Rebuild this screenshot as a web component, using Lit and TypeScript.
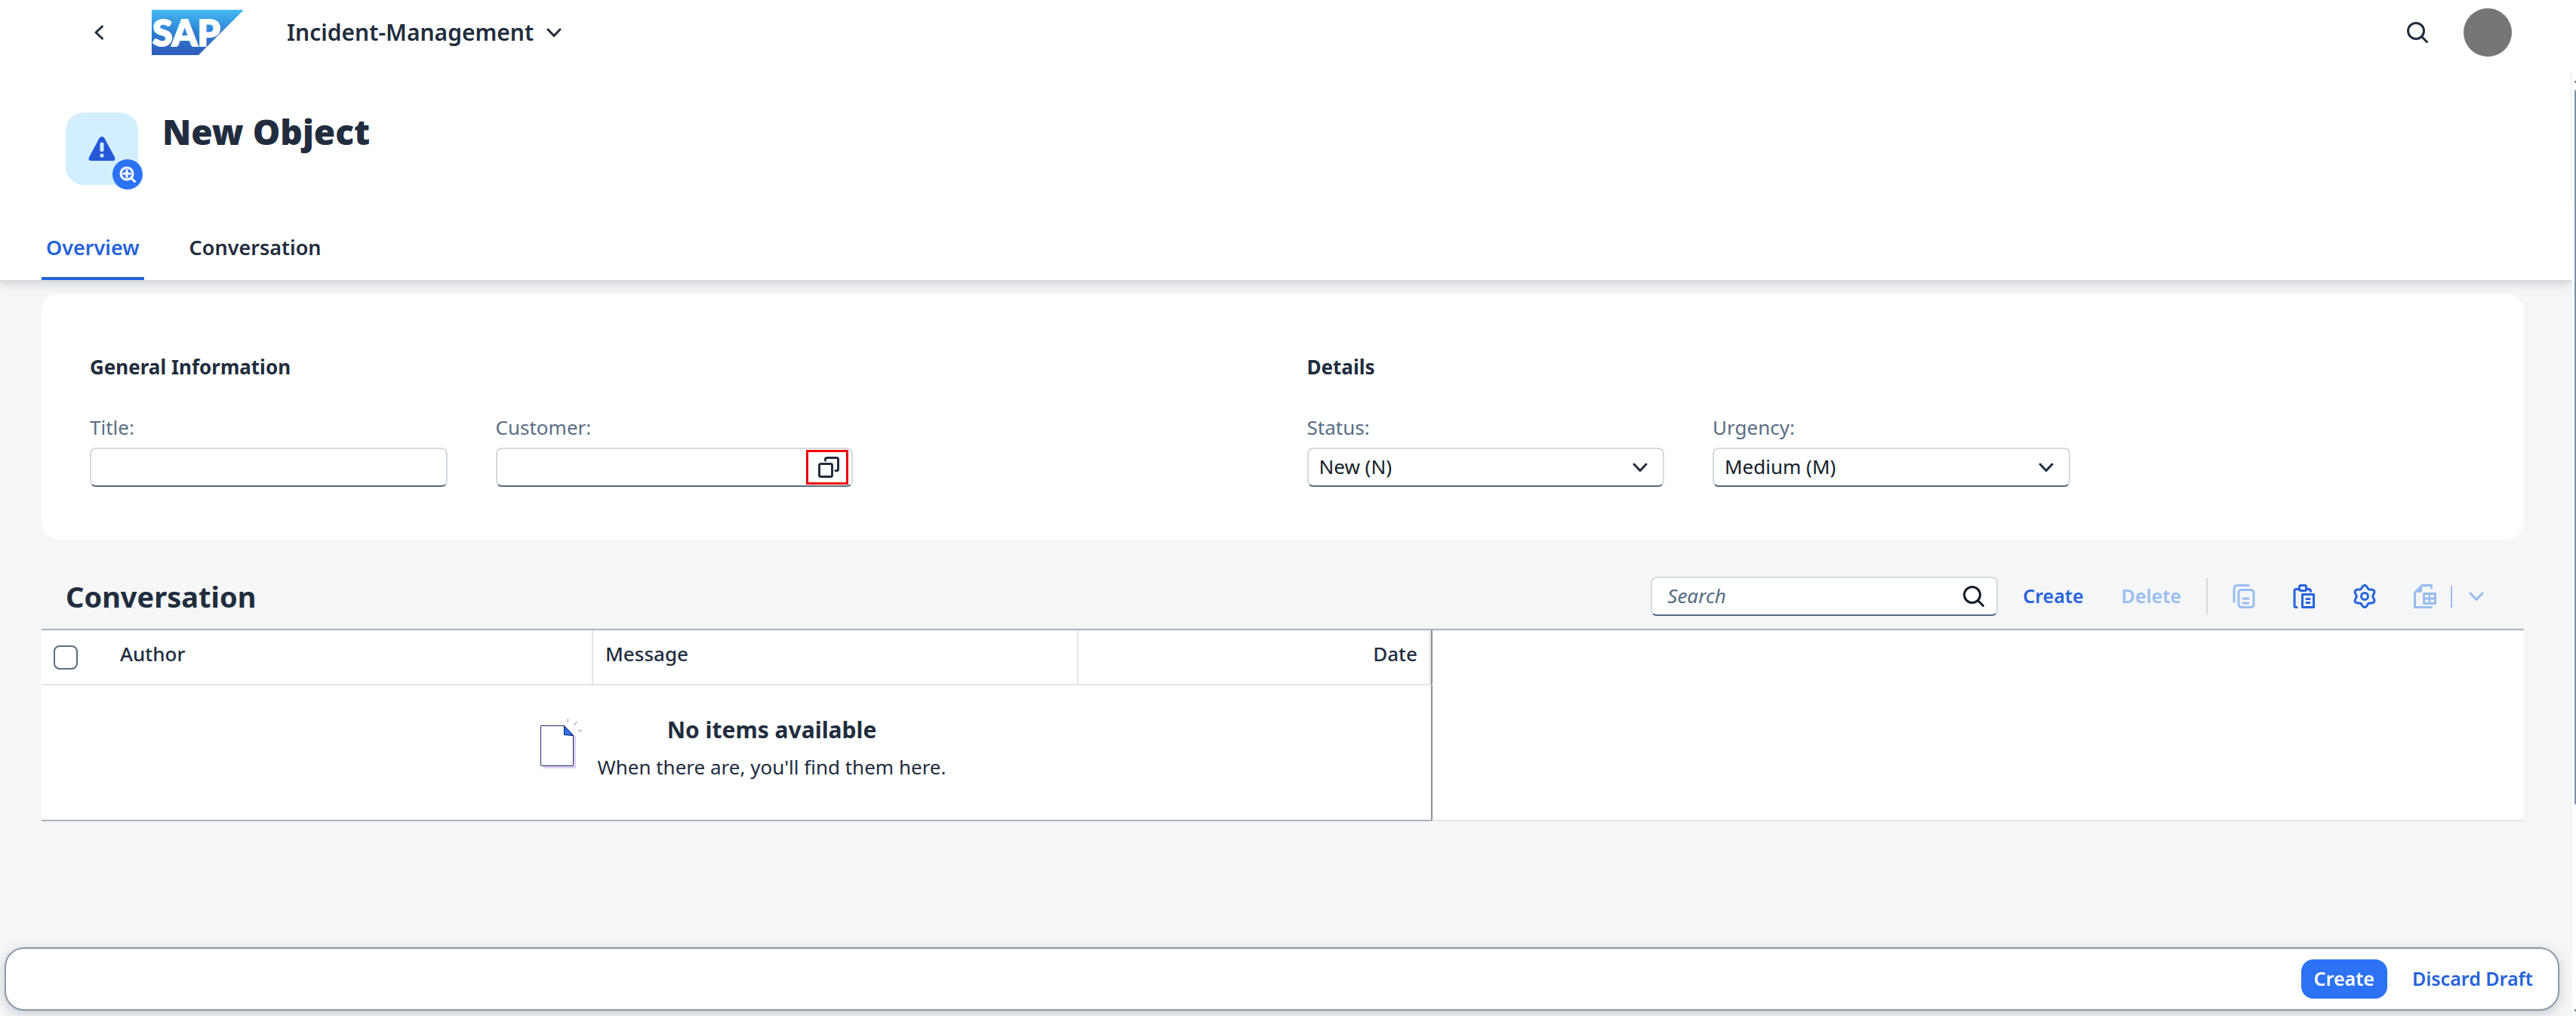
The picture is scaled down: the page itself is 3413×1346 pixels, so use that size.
import { LitElement, html, svg, css } from "lit";
import { customElement } from "lit/decorators.js";

/** Outline of the settings gear: a circle with six soft teeth. */
const gearPath = (() => {
  const points: string[] = [];
  for (let i = 0; i < 72; i++) {
    const a = (i / 72) * Math.PI * 2;
    const r = 12.6 + 1.9 * Math.cos(6 * a);
    points.push(`${(16 + r * Math.sin(a)).toFixed(2)} ${(16 - r * Math.cos(a)).toFixed(2)}`);
  }
  return `M${points.join("L")}Z`;
})();

const icon = (body: unknown, width = 32, height = 32, cls = "") => html`
  <svg
    class="icon ${cls}"
    width=${width}
    height=${height}
    viewBox="0 0 ${width} ${height}"
    aria-hidden="true"
  >
    ${body}
  </svg>
`;

const chevronDown = icon(svg`<path d="M2 2 L10 10.500 L18 2"/>`, 20, 13);
const chevronLeft = icon(svg`<path d="M10.500 2 L2 10 L10.500 18"/>`, 13, 20);
const searchIcon = icon(svg`<circle cx="14" cy="14" r="10.500"/><path d="M21.500 21.500 L28.500 28.500"/>`);
const valueHelpIcon = icon(svg`
  <rect x="3.500" y="11.500" width="17" height="17" rx="2"/>
  <path d="M11.500 7 V5.500 Q11.500 3.500 13.500 3.500 H26.500 Q28.500 3.500 28.500 5.500 V18.500 Q28.500 20.500 26.500 20.500 H25"/>
`);
const copyIcon = icon(svg`
  <path d="M3 23 V6 Q3 1.500 7.500 1.500 H22"/>
  <rect x="9" y="7.500" width="20" height="23" rx="4"/>
  <path d="M15 19 H22 M15 25 H22"/>
`);
const pasteIcon = icon(svg`
  <path d="M6 30.500 H5 Q3 30.500 3 28.500 V8.500 Q3 6.500 5 6.500 H9 M19 6.500 H22 Q24.500 6.500 24.500 9.500"/>
  <rect x="9.500" y="1.500" width="9" height="7" rx="2"/>
  <rect x="13.500" y="13.500" width="15" height="17"/>
  <path d="M19 19.500 H23 M19 24.500 H23"/>
`);
const settingsIcon = icon(svg`<path d=${gearPath}/><circle cx="16" cy="16" r="4.500"/>`);
const exportIcon = icon(svg`
  <path d="M24.500 5 V1.500 H12 L2.500 11 V30.500 H24.500"/>
  <path class="solid" d="M12 2 V8.500 Q12 11 9.500 11 H3 Z"/>
  <rect x="14.500" y="12.500" width="15" height="13"/>
  <path d="M22 12.500 V25.500 M14.500 19 H29.500"/>
`);
const alertIcon = icon(svg`
  <path class="alert" d="M14.600 2 Q18 -2.200 21.400 2 L34.600 26.500 Q37 31.500 32.600 32 H3.400 Q-1 31.500 1.400 26.500 Z"/>
  <path class="mark" d="M18 10 V17.500"/>
  <circle class="dot" cx="18" cy="25" r="2.600"/>
`, 36, 32);
const zoomInIcon = icon(svg`
  <circle cx="10" cy="10" r="8"/><path d="M16 16 L20.500 20.500 M10 5.500 V14.500 M5.500 10 H14.500"/>
`, 22, 22);

const emptyIllustration = html`
  <svg class="illustration" width="98" height="80" viewBox="0 0 98 80" aria-hidden="true">
    <defs>
      <pattern id="dots" width="2" height="2" patternUnits="userSpaceOnUse">
        <rect width="1" height="1" fill="#b9a2f5" />
        <rect x="1" y="1" width="1" height="1" fill="#b9a2f5" />
      </pattern>
    </defs>
    <rect x="27" y="28" width="43" height="44" fill="url(#dots)" />
    <path d="M23.500 15.500 H54 L66.500 28 V67 Q66.500 68.500 65 68.500 H25 Q23.500 68.500 23.500 67 Z" fill="#fff" stroke="#1c2a66" />
    <path d="M54.500 15.500 V27.500 L66.500 28.500 Z" fill="#2b72f5" stroke="#0b1a55" />
    <path d="M59.500 6 L59 11 M71.500 10 L67.500 15 M78 21 L73 23" fill="none" stroke="#a9b4be" stroke-width="1.400" />
  </svg>
`;

@customElement("app-root")
export class AppRoot extends LitElement {
  static styles = css`
    :host {
      display: flex;
      flex-direction: column;
      min-height: 100vh;
      background: #fff;
      color: #212d3e;
      font-family: "Noto Sans", "Open Sans", sans-serif;
      font-size: 26px;
      line-height: 36px;
    }
    * {
      box-sizing: border-box;
    }
    h1, h2, h3, p {
      margin: 0;
    }
    button, input, select {
      margin: 0;
      padding: 0;
      border: 0;
      background: transparent;
      color: inherit;
      font: inherit;
    }
    button {
      display: inline-flex;
      align-items: center;
      justify-content: center;
      cursor: pointer;
    }
    input, select {
      outline: 0;
    }
    .icon {
      display: block;
      flex: none;
      fill: none;
      stroke: currentColor;
      stroke-width: 3;
      stroke-linecap: round;
      stroke-linejoin: round;
    }
    .icon .solid {
      fill: currentColor;
      stroke: none;
    }

    .shell {
      display: flex;
      align-items: center;
      height: 95px;
      padding: 0 85px 9px 99px;
    }
    .square {
      width: 64px;
      height: 52px;
    }
    .logo {
      display: block;
      margin-left: 38px;
    }
    .logo text {
      font-family: Lato, "Noto Sans", sans-serif;
      font-weight: 900;
      font-size: 48px;
      fill: #fff;
      stroke: #fff;
      stroke-width: 2;
    }
    .app-title {
      gap: 17px;
      margin: 0 auto 0 57px;
      font-size: 30px;
      font-weight: 600;
    }
    .user {
      width: 64px;
      height: 64px;
      margin-left: 29px;
      border-radius: 50%;
      background: #767676;
    }

    .viewport {
      display: flex;
      flex: 1;
    }
    .page {
      display: flex;
      flex: 1;
      flex-direction: column;
      min-width: 0;
      background: #f5f6f7;
    }
    .scrollbar {
      display: flex;
      flex: none;
      flex-direction: column;
      align-items: flex-end;
      width: 5px;
      padding: 12px 0 6px;
    }
    .arrow {
      width: 2px;
      height: 3px;
      background: #7b91a8;
    }
    .track {
      flex: 1;
      width: 2px;
      padding: 9px 0;
    }
    .thumb {
      height: 78.3%;
      border-radius: 2px 0 0 2px;
      background: #7b91a8;
    }

    .page-header {
      position: relative;
      background: #fff;
      box-shadow: 0 2px 0 #d8dbdc, 0 4px 14px rgba(60, 75, 90, 0.24);
      clip-path: inset(0 0 -24px 0);
    }
    .heading {
      display: flex;
      gap: 32px;
      height: 173px;
      padding: 54px 87px 0;
      border-right: 3px solid #f5f6f7;
    }
    .heading h1 {
      font-size: 46px;
      font-weight: 900;
      line-height: 50px;
    }
    .avatar {
      position: relative;
      display: grid;
      place-items: center;
      width: 96px;
      height: 96px;
      border-radius: 24px;
      background: #d3efff;
      color: #2358d8;
    }
    .avatar .alert {
      fill: currentColor;
      stroke: none;
    }
    .avatar .mark {
      stroke: #d3efff;
      stroke-width: 5;
    }
    .avatar .dot {
      fill: #d3efff;
      stroke: none;
    }
    .badge {
      position: absolute;
      right: -6px;
      bottom: -6px;
      width: 40px;
      height: 40px;
      border-radius: 50%;
      background: #2b72f5;
      color: #fff;
    }
    .tabs {
      display: flex;
      gap: 54px;
      padding: 42px 55px 0;
    }
    .tab {
      padding: 0 6px 25px;
      color: inherit;
      font-size: 27px;
      font-weight: 600;
      text-decoration: none;
    }
    .tab.selected {
      padding-bottom: 21px;
      border-bottom: 4px solid #2663dc;
      color: #2663dc;
    }

    .card {
      display: grid;
      grid-template-columns: repeat(2, 1fr);
      gap: 64px;
      margin: 18px 64px 0 55px;
      padding: 79px 64px 70px;
      border-radius: 24px;
      background: #fff;
    }
    .card h3 {
      margin-bottom: 44px;
      font-size: 26px;
      font-weight: 700;
    }
    .fields {
      display: grid;
      grid-template-columns: repeat(3, 1fr);
      gap: 64px;
    }
    .field {
      display: flex;
      flex-direction: column;
      gap: 9px;
    }
    .field label {
      color: #5a6d84;
    }
    .control {
      display: flex;
      position: relative;
      height: 52px;
      border: 2px solid #d5dadd;
      border-bottom-color: #556b82;
      border-radius: 8px;
      background: #fff;
    }
    .control input, .control select {
      flex: 1;
      min-width: 0;
      padding: 0 14px 2px;
    }
    .control select {
      appearance: none;
      color: #131e29;
    }
    .control > .icon {
      position: absolute;
      top: 18px;
      right: 20px;
      pointer-events: none;
    }
    .value-help {
      width: 56px;
      height: 46px;
      margin: 1px 4px;
      padding-left: 4px;
      border: 3px solid #ec0006;
    }

    .toolbar {
      display: flex;
      align-items: center;
      gap: 16px;
      margin: 0 64px 0 55px;
      padding: 49px 33px 17px 32px;
    }
    .toolbar h2 {
      margin-right: auto;
      font-size: 38px;
      font-weight: 700;
      line-height: 52px;
    }
    .search {
      width: 460px;
    }
    .search input {
      padding: 0 0 2px 20px;
    }
    .search input::placeholder {
      color: #556b82;
      font-style: italic;
      opacity: 1;
    }
    .search button {
      width: 60px;
      color: #131e29;
    }
    .text-button {
      height: 52px;
      padding: 0 17px 2px;
      border-radius: 16px;
      color: #2663dc;
      font-size: 25px;
      font-weight: 600;
    }
    .toolbar .square {
      color: #2663dc;
    }
    .toolbar button:disabled {
      color: #98bdf0;
      cursor: default;
    }
    .divider {
      width: 2px;
      height: 48px;
      background: #d5d8db;
    }
    .split {
      display: flex;
      align-items: center;
      gap: 2px;
    }
    .split .divider {
      height: 29px;
      background: #98bdf0;
    }
    .toolbar .menu {
      width: 60px;
    }

    .table-wrap {
      margin: 0 64px 0 55px;
    }
    table {
      width: 100%;
      border-collapse: separate;
      border-spacing: 0;
      border-top: 2px solid #a7b2be;
      background: #fff;
      table-layout: fixed;
    }
    .col-select {
      width: 88px;
    }
    .col-wide {
      width: 19.55%;
    }
    .col-date {
      width: 14.2%;
    }
    th {
      height: 73px;
      padding: 13px 16px 0;
      border-right: 2px solid #e5e5e5;
      border-bottom: 2px solid #e5e5e5;
      font-size: 26px;
      font-weight: 500;
      text-align: left;
      vertical-align: top;
    }
    th.select {
      padding-top: 20px;
      border-right: 0;
    }
    th.date {
      text-align: right;
    }
    td {
      height: 180px;
      padding: 38px 4px 0 0;
      border-bottom: 2px solid #a7b2be;
      vertical-align: top;
    }
    .rest {
      border-right: 0;
      border-left: 2px solid #8c8c8c;
    }
    th.rest {
      border-bottom-color: transparent;
    }
    td.rest {
      border-bottom-color: #e5e5e5;
    }
    .check {
      display: block;
      width: 32px;
      height: 32px;
      border: 2px solid #5a6d84;
      border-radius: 8px;
      appearance: none;
      background: #fff;
    }
    .empty {
      display: flex;
      justify-content: center;
      text-align: center;
    }
    .illustration {
      display: block;
      flex: none;
    }
    .empty-title {
      margin-bottom: 10px;
      font-size: 30px;
      font-weight: 700;
      line-height: 42px;
    }

    .footer {
      display: flex;
      justify-content: flex-end;
      align-items: center;
      gap: 16px;
      height: 84px;
      margin: auto 17px 7px 6px;
      padding: 0 16px;
      border: 2px solid #8d99a6;
      border-radius: 26px;
      background: #fff;
      box-shadow: 0 4px 16px rgba(85, 107, 130, 0.3);
    }
    .text-button.primary {
      background: #2b72f5;
      color: #fff;
    }
  `;

  private renderSelect(id: string, label: string, value: string) {
    return html`
      <div class="field">
        <label for=${id}>${label}:</label>
        <div class="control">
          <select id=${id}>
            <option>${value}</option>
          </select>
          ${chevronDown}
        </div>
      </div>
    `;
  }

  private renderShell() {
    return html`
      <header class="shell">
        <button class="square" aria-label="Back">${chevronLeft}</button>
        <svg class="logo" width="122" height="60" viewBox="0 0 122 60" role="img" aria-label="SAP">
          <defs>
            <linearGradient id="sky" x1="0" y1="0" x2="0" y2="1">
              <stop offset="0" stop-color="#41b9f3" />
              <stop offset="0.500" stop-color="#2f80d3" />
              <stop offset="0.900" stop-color="#2d60be" />
            </linearGradient>
          </defs>
          <path d="M0 0 H122 L62 60 H0 Z" fill="url(#sky)" />
          <text x="1" y="48">SAP</text>
        </svg>
        <button class="app-title">Incident-Management ${chevronDown}</button>
        <button class="square" aria-label="Search">${searchIcon}</button>
        <button class="user" aria-label="Profile"></button>
      </header>
    `;
  }

  private renderHeader() {
    return html`
      <header class="page-header">
        <div class="heading">
          <div class="avatar">
            ${alertIcon}
            <button class="badge" aria-label="Zoom in">${zoomInIcon}</button>
          </div>
          <h1>New Object</h1>
        </div>
        <nav class="tabs">
          <a class="tab selected" href="#overview">Overview</a>
          <a class="tab" href="#conversation">Conversation</a>
        </nav>
      </header>
    `;
  }

  private renderForm() {
    return html`
      <section class="card" id="overview">
        <div>
          <h3>General Information</h3>
          <div class="fields">
            <div class="field">
              <label for="title">Title:</label>
              <div class="control"><input id="title" type="text" /></div>
            </div>
            <div class="field">
              <label for="customer">Customer:</label>
              <div class="control">
                <input id="customer" type="text" />
                <button class="value-help" aria-label="Show value help">${valueHelpIcon}</button>
              </div>
            </div>
          </div>
        </div>
        <div>
          <h3>Details</h3>
          <div class="fields">
            ${this.renderSelect("status", "Status", "New (N)")}
            ${this.renderSelect("urgency", "Urgency", "Medium (M)")}
          </div>
        </div>
      </section>
    `;
  }

  private renderToolbar() {
    return html`
      <div class="toolbar" id="conversation">
        <h2>Conversation</h2>
        <div class="control search">
          <input type="text" placeholder="Search" aria-label="Search" />
          <button aria-label="Search">${searchIcon}</button>
        </div>
        <button class="text-button">Create</button>
        <button class="text-button" disabled>Delete</button>
        <span class="divider"></span>
        <button class="square" aria-label="Copy" disabled>${copyIcon}</button>
        <button class="square" aria-label="Paste">${pasteIcon}</button>
        <button class="square" aria-label="Settings">${settingsIcon}</button>
        <div class="split">
          <button class="square" aria-label="Export" disabled>${exportIcon}</button>
          <span class="divider"></span>
          <button class="square menu" aria-label="Export options" disabled>${chevronDown}</button>
        </div>
      </div>
    `;
  }

  private renderTable() {
    return html`
      <div class="table-wrap">
        <table>
          <colgroup>
            <col class="col-select" />
            <col class="col-wide" />
            <col class="col-wide" />
            <col class="col-date" />
            <col />
          </colgroup>
          <thead>
            <tr>
              <th class="select"><input class="check" type="checkbox" aria-label="Select all" /></th>
              <th>Author</th>
              <th>Message</th>
              <th class="date">Date</th>
              <th class="rest"></th>
            </tr>
          </thead>
          <tbody>
            <tr>
              <td colspan="4">
                <div class="empty">
                  ${emptyIllustration}
                  <div>
                    <p class="empty-title">No items available</p>
                    <p>When there are, you'll find them here.</p>
                  </div>
                </div>
              </td>
              <td class="rest"></td>
            </tr>
          </tbody>
        </table>
      </div>
    `;
  }

  render() {
    return html`
      ${this.renderShell()}
      <div class="viewport">
        <main class="page">
          ${this.renderHeader()} ${this.renderForm()} ${this.renderToolbar()} ${this.renderTable()}
          <footer class="footer">
            <button class="text-button primary">Create</button>
            <button class="text-button">Discard Draft</button>
          </footer>
        </main>
        <div class="scrollbar" aria-hidden="true">
          <span class="arrow"></span>
          <div class="track"><div class="thumb"></div></div>
          <span class="arrow"></span>
        </div>
      </div>
    `;
  }
}
